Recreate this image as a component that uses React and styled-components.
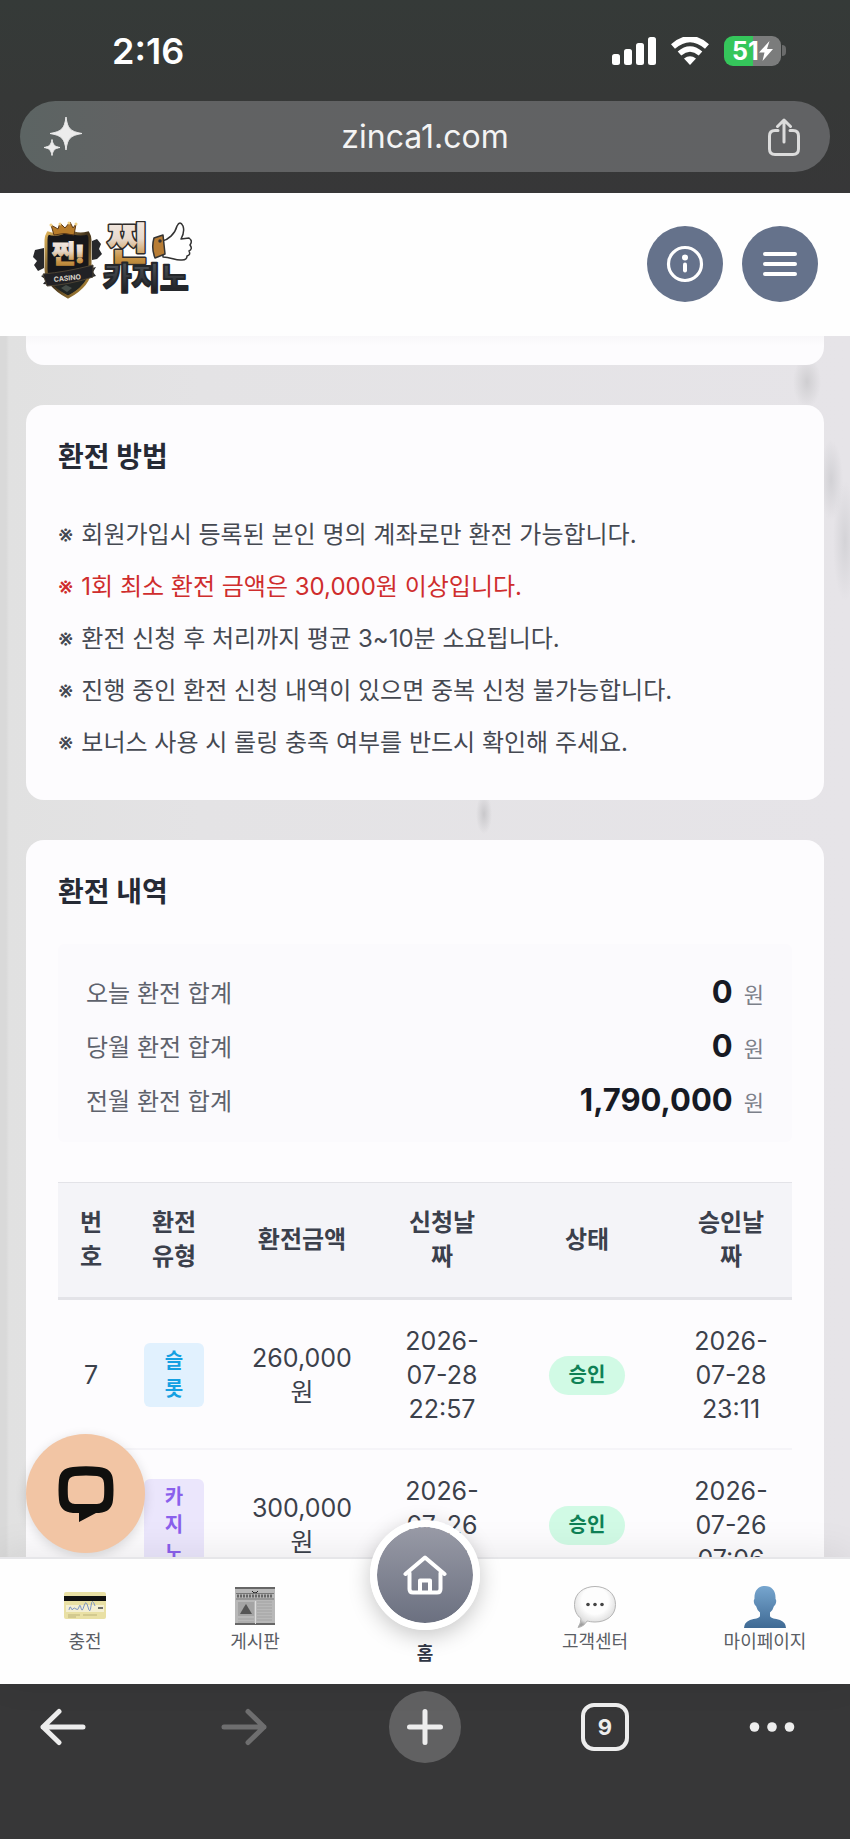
import React from "react";
import styled, { createGlobalStyle } from "styled-components";

const GlobalStyle = createGlobalStyle`
  * { box-sizing: border-box; }
  html, body, #root { height: 100%; margin: 0; }
  body {
    font-family: Inter, "Noto Sans CJK KR", sans-serif;
    font-size: 24px;
    color: #3c414b;
    background: #373738;
  }
  button, input { font: inherit; color: inherit; border: 0; padding: 0; margin: 0; background: none; }
  button { cursor: pointer; }
  a { color: inherit; text-decoration: none; }
  svg { display: block; flex: none; }
`;

const Screen = styled.div`
  display: flex;
  flex-direction: column;
  height: 100vh;
  overflow: hidden;
`;

const BrowserTop = styled.header`
  flex: none;
  padding: 0 20px 21px;
  background: linear-gradient(180deg, #353a38 0%, #363837 50%, #373738 100%);
  color: #fff;
`;

const StatusBar = styled.div`
  display: flex;
  align-items: center;
  justify-content: space-between;
  height: 101px;
  padding: 0 44px 0 92px;
`;

const Clock = styled.time`
  font-size: 36px;
  font-weight: 600;
`;

const StatusIcons = styled.div`
  display: flex;
  align-items: center;
  gap: 15px;
`;

const Battery = styled.div`
  display: flex;
  align-items: center;
  gap: 1px;
`;

const BatteryBody = styled.div`
  display: flex;
  align-items: center;
  justify-content: center;
  width: 57px;
  height: 30px;
  border-radius: 9px;
  background: linear-gradient(90deg, #35c65b 50%, #7b7c7c 50%);
  font-size: 25px;
  font-weight: 700;
`;

const BatteryTip = styled.span`
  width: 4px;
  height: 11px;
  border-radius: 0 4px 4px 0;
  background: #6a6b6b;
`;

const AddressBar = styled.div`
  display: flex;
  align-items: center;
  height: 71px;
  padding: 0 30px 0 24px;
  border-radius: 36px;
  background: linear-gradient(90deg, #5c6463 0%, #616263 14%, #616264 100%);
`;

const AddressInput = styled.input`
  flex: 1;
  min-width: 0;
  color: #f4f4f4;
  font-size: 32px;
  text-align: center;
  outline: none;
`;

const SiteHeader = styled.header`
  flex: none;
  display: flex;
  align-items: flex-start;
  justify-content: space-between;
  height: 143px;
  padding: 28px 32px 0;
  background: #fefefe;
`;

const HeaderActions = styled.div`
  display: flex;
  gap: 19px;
  padding-top: 5px;
`;

const RoundButton = styled.button`
  display: grid;
  place-items: center;
  width: 76px;
  height: 76px;
  border-radius: 50%;
  background: #65728b;
`;

const Main = styled.main`
  position: relative;
  flex: 1;
  min-height: 0;
  overflow: hidden;
  padding: 0 26px;
  background:
    radial-gradient(ellipse 14px 26px at 807px 46px, #cfced1, transparent),
    radial-gradient(ellipse 12px 40px at 831px 144px, #d2d1d5, transparent),
    radial-gradient(ellipse 12px 60px at 845px 205px, #d4d3d7, transparent),
    radial-gradient(ellipse 8px 20px at 484px 478px, #c9c8cb, transparent),
    linear-gradient(90deg, #d9d9d9 0, #d9d9d9 6px, #e1e1e1 9px, #e4e3e5 200px, #e6e4e8 100%);
`;

const Card = styled.section`
  margin-bottom: 40px;
  padding: 31px 32px;
  border-radius: 18px;
  background: #fdfcfe;
`;

const CardTail = styled.div`
  height: 29px;
  margin-bottom: 40px;
  border-radius: 0 0 18px 18px;
  background: linear-gradient(180deg, #f8f7f9, #fdfcfe 10px);
`;

const CardTitle = styled.h2`
  margin: 0 0 31px;
  color: #262a35;
  font-size: 28px;
  font-weight: 700;
  line-height: 42px;
`;

const NoticeList = styled.ul`
  margin: 0;
  padding: 0;
  list-style: none;
`;

const Notice = styled.li`
  display: flex;
  gap: 8px;
  align-items: center;
  line-height: 52px;
  color: ${(p) => (p.$warn ? "#cf2d2d" : "#454952")};
`;

const NoticeMark = styled.span`
  font-size: 24px;
`;

const Summary = styled.dl`
  margin: 0 0 40px;
  padding: 20px 28px 16px;
  border-radius: 6px;
  background: #fbfafd;
`;

const SummaryRow = styled.div`
  display: flex;
  align-items: center;
  justify-content: space-between;
  height: 54px;
  color: #5e626c;

  dd { margin: 0; display: flex; align-items: baseline; gap: 11px; }
`;

const Amount = styled.strong`
  color: #171a24;
  font-size: 31px;
  font-weight: 700;
`;

const Unit = styled.span`
  font-size: 22px;
  color: #7c808a;
`;

const History = styled.table`
  width: 100%;
  table-layout: fixed;
  border-collapse: separate;
  border-spacing: 0;
  line-height: 34px;
  text-align: center;

  th {
    padding: 23px 20px;
    border-top: 1px solid #e3e3e8;
    border-bottom: 3px solid #e3e3e8;
    background: #f4f4f8;
    color: #3b404c;
    font-weight: 600;
  }
  td {
    padding: 24px 20px 22px;
    border-bottom: 2px solid #f5f4f8;
    font-size: 25px;
    vertical-align: middle;
  }
`;

const kinds = {
  slot: { color: "#14a0e2", background: "#e1f1fe" },
  casino: { color: "#8a60ec", background: "#ebe6fc" },
};

const KindBadge = styled.span`
  display: block;
  padding: 4px 20px;
  border-radius: 6px;
  color: ${(p) => kinds[p.$kind].color};
  background: ${(p) => kinds[p.$kind].background};
  font-size: 20px;
  font-weight: 700;
  line-height: 28px;
`;

const StatusPill = styled.span`
  display: inline-block;
  padding: 0 20px;
  border-radius: 20px;
  background: #d1fae5;
  color: #0f8156;
  font-size: 20px;
  font-weight: 700;
  line-height: 39px;
  vertical-align: middle;
`;

const ChatButton = styled.button`
  position: absolute;
  left: 26px;
  bottom: 4px;
  z-index: 3;
  display: grid;
  place-items: center;
  width: 119px;
  height: 119px;
  border-radius: 50%;
  background: #f2c5a4;
  box-shadow: 0 3px 12px rgba(0, 0, 0, 0.14);
`;

const SiteNav = styled.nav`
  position: relative;
  flex: none;
  display: grid;
  grid-template-columns: repeat(5, 1fr);
  height: 127px;
  border-top: 2px solid #e6e6e9;
  background: #fefefe;
  box-shadow: 0 -4px 36px rgba(0, 0, 0, 0.08);
`;

const NavLink = styled.a`
  display: flex;
  flex-direction: column;
  align-items: center;
  padding-top: 27px;
  font-size: 18px;
  line-height: 28px;
  color: ${(p) => (p.$active ? "#2f3644" : "#5a5d64")};
  font-weight: ${(p) => (p.$active ? 700 : 400)};
`;

const HomeDisc = styled.span`
  display: grid;
  place-items: center;
  width: 110px;
  height: 110px;
  margin: -66px 0 10px;
  border: 7px solid #fff;
  border-radius: 50%;
  background: linear-gradient(180deg, #989aa6, #6b7080) padding-box;
  box-shadow: 0 6px 22px rgba(0, 0, 0, 0.22);
`;

const Toolbar = styled.footer`
  flex: none;
  display: grid;
  grid-template-columns: 126fr 236fr 126fr 234fr 100fr;
  justify-items: center;
  align-items: center;
  padding: 7px 28px 76px 0;
  background: #373738;
  color: #ededed;
`;

const ToolButton = styled.button`
  display: grid;
  place-items: center;
  width: 72px;
  height: 72px;
  border-radius: 50%;
  color: ${(p) => (p.disabled ? "#6e6e6f" : "#ededed")};
  background: ${(p) => (p.$filled ? "#616162" : "none")};
`;

const TabCount = styled.span`
  display: grid;
  place-items: center;
  width: 48px;
  height: 48px;
  border: 4px solid #ededed;
  border-radius: 13px;
  font-size: 22px;
  font-weight: 700;
`;

const Signal = () => (
  <svg width="44" height="28" viewBox="0 0 44 28" fill="#fff" aria-hidden="true">
    <rect x="0" y="17" width="8" height="11" rx="2.5" />
    <rect x="12" y="12" width="8" height="16" rx="2.5" />
    <rect x="24" y="6" width="8" height="22" rx="2.5" />
    <rect x="36" y="0" width="8" height="28" rx="2.5" />
  </svg>
);

const Wifi = () => (
  <svg width="38" height="28" viewBox="0 0 38 28" aria-hidden="true">
    <path d="M2 9.500Q19-5.500 36 9.500" fill="none" stroke="#fff" strokeWidth="6" />
    <path d="M8.500 16.500Q19 7.500 29.500 16.500" fill="none" stroke="#fff" strokeWidth="5.500" />
    <path d="M13 21.500Q19 17 25 21.500L19 28Z" fill="#fff" />
  </svg>
);

const Bolt = () => (
  <svg width="14" height="20" viewBox="0 0 14 20" fill="#fff" aria-hidden="true">
    <path d="M10.500 0 0 11.500h5.500L3.500 20 14 8H8Z" />
  </svg>
);

const Sparkles = () => (
  <svg width="38" height="39" viewBox="0 0 38 39" fill="#ececec" aria-hidden="true">
    <path d="M22 0C23.500 11.500 26 14.500 38 16.500C26 18.500 23.500 21.500 22 33C20.500 21.500 18 18.500 6 16.500C18 14.500 20.500 11.500 22 0Z" stroke="#ececec" strokeWidth="1" strokeLinejoin="round" />
    <path d="M8 22.500C9 28 10.500 29.500 16 30.500C10.500 31.500 9 33 8 38.500C7 33 5.500 31.500 0 30.500C5.500 29.500 7 28 8 22.500Z" stroke="#ececec" strokeWidth="1" strokeLinejoin="round" />
  </svg>
);

const Share = () => (
  <svg width="32" height="38" viewBox="0 0 32 38" fill="none" stroke="#dcdcdc" strokeWidth="3" strokeLinecap="round" strokeLinejoin="round" aria-hidden="true">
    <path d="M10 12.500H7Q1.500 12.500 1.500 18V31Q1.500 36.500 7 36.500H25Q30.500 36.500 30.500 31V18Q30.500 12.500 25 12.500H22" />
    <path d="M16 24V2M9.500 8.500 16 2l6.500 6.500" />
  </svg>
);

const Logo = () => (
  <svg width="162" height="80" viewBox="0 0 162 80" role="img" aria-label="찐카지노">
    <defs>
      <linearGradient id="gold" x1="0" y1="0" x2="0" y2="1">
        <stop offset="0" stopColor="#f5ebe4" />
        <stop offset="0.4" stopColor="#e7d9cd" />
        <stop offset="0.75" stopColor="#c99445" />
        <stop offset="1" stopColor="#a8762c" />
      </linearGradient>
      <linearGradient id="rim" x1="0" y1="0" x2="1" y2="1">
        <stop offset="0" stopColor="#e3b75c" />
        <stop offset="0.5" stopColor="#41321c" />
        <stop offset="1" stopColor="#c79a3f" />
      </linearGradient>
      <linearGradient id="steel" x1="0" y1="0" x2="0" y2="1">
        <stop offset="0" stopColor="#555a60" />
        <stop offset="1" stopColor="#16181c" />
      </linearGradient>
    </defs>
    <g fill="#27282b">
      <path d="M3 29 12 27V47L6 50 2 44 5 40 1 36Z" />
      <path d="M60 20 65 18 69 23 67 28 70 33 65 38 60 39Z" />
      <path d="M9 55 20 50V64L11 63 14 59Z" />
      <path d="M53 49 64 46 61 51 64 55 53 58Z" />
    </g>
    <path d="M36 9C43 14 49 14 56 12Q58 15 58 19V48Q58 64 36 76Q14 64 14 48V19Q14 15 16 12C24 15 30 13 36 9Z" fill="#17171a" stroke="url(#rim)" strokeWidth="3" />
    <path d="M18 60Q36 55 55 57Q49 68 36 74Q23 68 18 60Z" fill="#202423" />
    <path d="M22 14 19 4 26 8 28 2 33 7 38 1 41 7 44 3 42 14Q32 11 22 14Z" fill="#b77c2b" stroke="#5a3716" strokeWidth="1" />
    <g fill="#f0cf83">
      <circle cx="19" cy="4" r="1.500" /><circle cx="28" cy="3" r="1.500" /><circle cx="37" cy="2" r="1.500" /><circle cx="44" cy="3" r="1.500" />
    </g>
    <text x="20" y="42" fontSize="25" fontWeight="900" fill="url(#gold)" stroke="url(#gold)" strokeWidth="1">찐!</text>
    <path d="M11 53Q34 51 61 44V56Q36 64 15 65Z" fill="#212125" stroke="#4d4435" strokeWidth="1" />
    <text x="22" y="61" fontSize="7" fontWeight="700" fill="#d8d2c8" transform="rotate(-6 22 61)">CASINO</text>
    <path d="m34 64 6 3-5 4-6-4Z" fill="#454d48" />
    <text x="75" y="39" fontSize="44" fontWeight="900" fill="url(#gold)" stroke="#2f2b29" strokeWidth="3" paintOrder="stroke" strokeLinejoin="round">찐</text>
    <text x="71" y="68" fontSize="31" fontWeight="900" fill="url(#steel)" stroke="#24272b" strokeWidth="2" strokeLinejoin="round">카지노</text>
    <g stroke="#333" strokeWidth="1.500" strokeLinejoin="round">
      <path d="M130 20C136 19 143 13 145 5Q148-1 151 5Q153 11 149 18L157 17Q161 20 158 24Q161 28 157 30Q159 34 155 35Q155 39 150 39C144 40 139 36 131 36Z" fill="#fff" />
      <path d="M122 17 131 14 133 33 123 37Q119 27 122 17Z" fill="#b87d35" />
      <circle cx="128" cy="20" r="1" fill="#111" />
    </g>
  </svg>
);

const InfoIcon = () => (
  <svg width="38" height="38" viewBox="0 0 38 38" aria-hidden="true">
    <circle cx="19" cy="19" r="16.500" fill="none" stroke="#fff" strokeWidth="3.200" />
    <circle cx="19" cy="12.500" r="3" fill="#fff" />
    <path d="M19 19.500v6" stroke="#fff" strokeWidth="4" strokeLinecap="round" />
  </svg>
);

const MenuIcon = () => (
  <svg width="34" height="26" viewBox="0 0 34 26" stroke="#fff" strokeWidth="4" strokeLinecap="round" aria-hidden="true">
    <path d="M2 3h30M2 13h30M2 23h30" />
  </svg>
);

const ChatIcon = () => (
  <svg width="56" height="56" viewBox="0 0 56 56" fill="#10100e" aria-hidden="true">
    <path fillRule="evenodd" d="M15 1Q28-.5 41 1Q54 2 55 14Q56 24 55 34Q54 46 41 47H38L21 56V47H15Q2 46 1 34Q0 24 1 14Q2 2 15 1ZM17 10Q10.500 10.500 10 17Q9.500 24 10 31Q10.500 38 17 38H21V47L35 38H39Q45.500 38 46 31Q46.500 24 46 17Q45.500 10.500 39 10Q28 9 17 10Z" />
    <path d="M21 38V47H38L35 38Z" />
  </svg>
);

const CardIcon = () => (
  <svg width="42" height="42" viewBox="0 0 42 42" aria-hidden="true">
    <rect y="6" width="42" height="27" rx="2" fill="#e9e0a4" />
    <path d="M0 10h42v5H0Z" fill="#111" />
    <rect x="2" y="19" width="38" height="7" fill="#f4efd2" />
    <path d="M5 24q1-5 2-2t2 1 3 0 3-2 2 1 3-2 4 1 3-1 4 0" fill="none" stroke="#7d95c4" strokeWidth="1" />
    <path d="M34 22h5" stroke="#444" strokeWidth="1.500" />
    <path d="M4 29h12M4 31h8M19 29h14" stroke="#bdb47c" strokeWidth="1" />
  </svg>
);

const NewsIcon = () => (
  <svg width="42" height="42" viewBox="0 0 42 42" aria-hidden="true">
    <rect x="1" y="1" width="40" height="38" rx="1" fill="#b8b8b8" />
    <path d="M1 2h40M1 38h40" stroke="#666" strokeWidth="2" />
    <path d="M18 5q3 4 6 0l-3 3Z" fill="#222" stroke="#222" />
    <path d="M3 10h36" stroke="#666" strokeWidth="3" strokeDasharray="2 1" />
    <path d="M2 7.500h38M2 13h38" stroke="#777" strokeWidth="1" />
    <rect x="4" y="16" width="16" height="14" fill="#a4a4a4" />
    <path d="m6 28 4-7 2-3 3 5 3 5Z" fill="#555" />
    <path d="M23 16h15M23 19h15M23 22h15M23 25h15M23 28h15M23 31h15M23 34h15M4 33h16M4 36h16" stroke="#a2a2a2" strokeWidth="1" />
    <path d="M21.500 15v23" stroke="#ddd" />
  </svg>
);

const BubbleIcon = () => (
  <svg width="42" height="42" viewBox="0 0 42 42" aria-hidden="true">
    <defs>
      <radialGradient id="bubble" cx="0.5" cy="0.35" r="0.65">
        <stop offset="0.5" stopColor="#fdfdfd" />
        <stop offset="0.85" stopColor="#dedede" />
        <stop offset="1" stopColor="#a0a0a0" />
      </radialGradient>
    </defs>
    <path d="M21 .5C32 .5 41.500 7 41.500 18.500C41.500 30 32 36 21 36C18 36 15 35.500 13 35Q10 40.500 4 41.500Q7 37 7 32.500C3 29.500 .5 25 .5 18.500C.5 7 10 .5 21 .5Z" fill="url(#bubble)" stroke="#b4b4b4" strokeWidth="1" />
    <g fill="#444"><circle cx="14" cy="18.500" r="1.800" /><circle cx="21" cy="18.500" r="1.800" /><circle cx="28" cy="18.500" r="1.800" /></g>
  </svg>
);

const PersonIcon = () => (
  <svg width="42" height="42" viewBox="0 0 42 42" aria-hidden="true">
    <defs>
      <linearGradient id="person" x1="0" y1="0" x2="0" y2="1">
        <stop offset="0" stopColor="#77a6cf" />
        <stop offset="1" stopColor="#3f6a94" />
      </linearGradient>
    </defs>
    <path d="M21 0C28 0 32 5 31.500 13C33 14 32 19 30 20Q29 24 26 26.500V30C27 33 31 32 36 34Q42 36.500 42 42H0Q0 36.500 6 34C11 32 15 33 16 30V26.500Q13 24 12 20C10 19 9 14 10.500 13C10 5 14 0 21 0Z" fill="url(#person)" />
  </svg>
);

const HomeIcon = () => (
  <svg width="44" height="40" viewBox="0 0 44 40" fill="none" stroke="#fff" strokeWidth="4" strokeLinecap="round" strokeLinejoin="round" aria-hidden="true">
    <path d="M2.500 19 22 2.500 41.500 19" />
    <path d="M6.500 18V34Q6.500 37.500 10 37.500H34Q37.500 37.500 37.500 34V18" />
    <path d="M17 37V25.500H27V37" />
  </svg>
);

const Arrow = ({ forward }) => (
  <svg width="46" height="38" viewBox="0 0 46 38" fill="none" stroke="currentColor" strokeWidth="5" strokeLinecap="round" strokeLinejoin="round" aria-hidden="true">
    <path d={forward ? "M3 19H43M27 3.500 43 19 27 34.500" : "M43 19H3M19 3.500 3 19 19 34.500"} />
  </svg>
);

const Plus = () => (
  <svg width="36" height="36" viewBox="0 0 36 36" stroke="currentColor" strokeWidth="5" strokeLinecap="round" aria-hidden="true">
    <path d="M18 2.500v31M2.500 18h31" />
  </svg>
);

const Dots = () => (
  <svg width="46" height="10" viewBox="0 0 46 10" fill="currentColor" aria-hidden="true">
    <circle cx="5.500" cy="5" r="4.800" /><circle cx="23" cy="5" r="4.800" /><circle cx="40.500" cy="5" r="4.800" />
  </svg>
);

const notices = [
  { text: "회원가입시 등록된 본인 명의 계좌로만 환전 가능합니다." },
  { text: "1회 최소 환전 금액은 30,000원 이상입니다.", warn: true },
  { text: "환전 신청 후 처리까지 평균 3~10분 소요됩니다." },
  { text: "진행 중인 환전 신청 내역이 있으면 중복 신청 불가능합니다." },
  { text: "보너스 사용 시 롤링 충족 여부를 반드시 확인해 주세요." },
];

const totals = [
  ["오늘 환전 합계", "0"],
  ["당월 환전 합계", "0"],
  ["전월 환전 합계", "1,790,000"],
];

const columns = [
  ["번호", 66],
  ["환전유형", 100],
  ["환전금액", 156],
  ["신청날짜", 124],
  ["상태", 166],
  ["승인날짜", 122],
];

const rows = [
  { no: 7, kind: "slot", label: "슬롯", amount: "260,000원", asked: "2026-07-28 22:57", done: "2026-07-28 23:11" },
  { no: 6, kind: "casino", label: "카지노", amount: "300,000원", asked: "2026-07-26 06:58", done: "2026-07-26 07:06" },
];

export default function App() {
  return (
    <Screen>
      <GlobalStyle />
      <BrowserTop>
        <StatusBar>
          <Clock>2:16</Clock>
          <StatusIcons>
            <Signal />
            <Wifi />
            <Battery>
              <BatteryBody>51<Bolt /></BatteryBody>
              <BatteryTip />
            </Battery>
          </StatusIcons>
        </StatusBar>
        <AddressBar>
          <button type="button" aria-label="AI"><Sparkles /></button>
          <AddressInput type="text" aria-label="주소" defaultValue="zinca1.com" />
          <button type="button" aria-label="공유"><Share /></button>
        </AddressBar>
      </BrowserTop>

      <SiteHeader>
        <a href="#home"><Logo /></a>
        <HeaderActions>
          <RoundButton type="button" aria-label="안내"><InfoIcon /></RoundButton>
          <RoundButton type="button" aria-label="메뉴"><MenuIcon /></RoundButton>
        </HeaderActions>
      </SiteHeader>

      <Main>
        <CardTail />
        <Card>
          <CardTitle>환전 방법</CardTitle>
          <NoticeList>
            {notices.map((n) => (
              <Notice key={n.text} $warn={n.warn}>
                <NoticeMark>※</NoticeMark>
                {n.text}
              </Notice>
            ))}
          </NoticeList>
        </Card>
        <Card>
          <CardTitle>환전 내역</CardTitle>
          <Summary>
            {totals.map(([label, value]) => (
              <SummaryRow key={label}>
                <dt>{label}</dt>
                <dd><Amount>{value}</Amount><Unit>원</Unit></dd>
              </SummaryRow>
            ))}
          </Summary>
          <History>
            <colgroup>
              {columns.map(([name, width]) => <col key={name} width={width} />)}
            </colgroup>
            <thead>
              <tr>{columns.map(([name]) => <th key={name} scope="col">{name}</th>)}</tr>
            </thead>
            <tbody>
              {rows.map((r) => (
                <tr key={r.no}>
                  <td>{r.no}</td>
                  <td><KindBadge $kind={r.kind}>{r.label}</KindBadge></td>
                  <td>{r.amount}</td>
                  <td>{r.asked}</td>
                  <td><StatusPill>승인</StatusPill></td>
                  <td>{r.done}</td>
                </tr>
              ))}
            </tbody>
          </History>
        </Card>
        <ChatButton type="button" aria-label="채팅"><ChatIcon /></ChatButton>
      </Main>

      <SiteNav>
        <NavLink href="#deposit"><CardIcon />충전</NavLink>
        <NavLink href="#board"><NewsIcon />게시판</NavLink>
        <NavLink href="#home" $active><HomeDisc><HomeIcon /></HomeDisc>홈</NavLink>
        <NavLink href="#support"><BubbleIcon />고객센터</NavLink>
        <NavLink href="#mypage"><PersonIcon />마이페이지</NavLink>
      </SiteNav>

      <Toolbar>
        <ToolButton type="button" aria-label="뒤로"><Arrow /></ToolButton>
        <ToolButton type="button" aria-label="앞으로" disabled><Arrow forward /></ToolButton>
        <ToolButton type="button" aria-label="새 탭" $filled><Plus /></ToolButton>
        <ToolButton type="button" aria-label="탭"><TabCount>9</TabCount></ToolButton>
        <ToolButton type="button" aria-label="더보기"><Dots /></ToolButton>
      </Toolbar>
    </Screen>
  );
}
